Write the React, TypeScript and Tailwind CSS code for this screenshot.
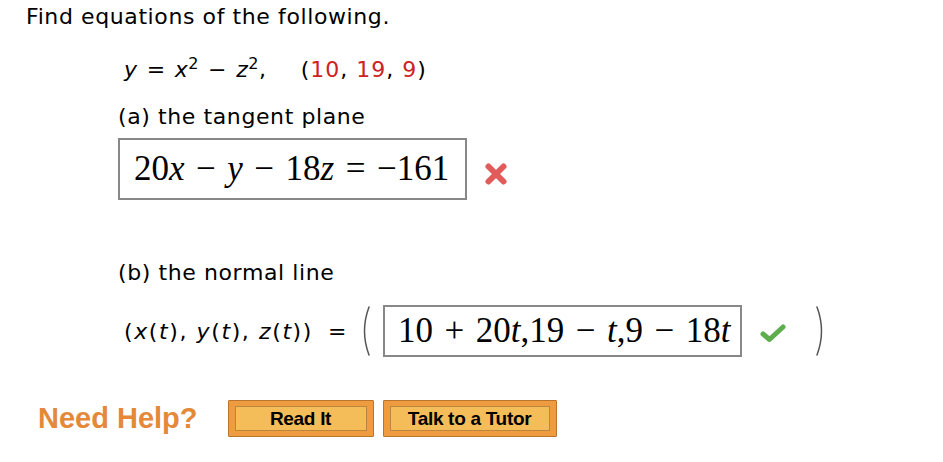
import React from "react";

const TEXT_FONT = "font-['DejaVu_Sans','Verdana',sans-serif]";
const MATH_FONT = "font-['Liberation_Serif','Times_New_Roman',serif]";

function RedX() {
  return (
    <svg width="26" height="26" viewBox="0 0 26 26" className="shrink-0">
      <path d="M5.5 5.5 L20.5 20.5 M20.5 5.5 L5.5 20.5" stroke="#e25b5b" strokeWidth="6" strokeLinecap="round" />
    </svg>
  );
}

function GreenCheck() {
  return (
    <svg width="28" height="20" viewBox="0 0 28 20" className="shrink-0">
      <path d="M4 11 L10.5 16.5 L24 4" stroke="#5fae4e" strokeWidth="5" strokeLinecap="round" strokeLinejoin="round" fill="none" />
    </svg>
  );
}

function Paren({ right = false }: { right?: boolean }) {
  return (
    <svg width="12" height="52" viewBox="0 0 12 52" className="shrink-0">
      <path
        d={right ? "M2 2 Q11 26 2 50" : "M10 2 Q1 26 10 50"}
        stroke="#555"
        strokeWidth="1.5"
        fill="none"
        strokeLinecap="round"
      />
    </svg>
  );
}

function Op({ children }: { children: React.ReactNode }) {
  return <span className="mx-[11.5px]">{children}</span>;
}

function TextOp({ children }: { children: React.ReactNode }) {
  return <span className="mx-[9px]">{children}</span>;
}

function HelpButton({ label, width }: { label: string; width: string }) {
  return (
    <button
      className={`${width} h-[37px] rounded-[1px] border border-[#b9752e] bg-[#ef9c40] px-[6px] py-[5px]`}
    >
      <span className="flex h-full w-full items-center justify-center border border-[#b98640] bg-[#f4bd5a] font-['Liberation_Sans',Arial,sans-serif] text-[19px] font-bold tracking-[-0.3px] text-black">
        {label}
      </span>
    </button>
  );
}

export default function App() {
  return (
    <div className={`${TEXT_FONT} min-h-[462px] w-[943px] bg-white pl-[26px] pt-[3px] text-black tracking-[0.6px]`}>
      <p className="text-[22px] leading-[28px]">Find equations of the following.</p>

      <div className="ml-[92px]">
        <p className="ml-[6px] mt-[25px] text-[22px] leading-[28px]">
          <i>y</i>
          <TextOp>=</TextOp>
          <i>x</i>
          <sup className="text-[16px]">2</sup>
          <TextOp>−</TextOp>
          <i>z</i>
          <sup className="text-[16px]">2</sup>,
          <span className="ml-[34px] tracking-[1px]">
            (<span className="text-[#cc2222]">10</span>, <span className="text-[#cc2222]">19</span>,{" "}
            <span className="text-[#cc2222]">9</span>)
          </span>
        </p>

        <p className="mt-[19px] text-[22px] leading-[28px]">(a) the tangent plane</p>

        <div className="mt-[7px] flex items-center">
          <div className={`${MATH_FONT} flex h-[62px] w-[349px] items-center border-2 border-[#888] pl-[14px] text-[35px] tracking-normal`}>
            20<i>x</i>
            <Op>−</Op>
            <i>y</i>
            <Op>−</Op>
            18<i>z</i>
            <Op>=</Op>
            −161
          </div>
          <div className="ml-[16px] mt-[10px]">
            <RedX />
          </div>
        </div>

        <p className="mt-[59px] text-[22px] leading-[28px]">(b) the normal line</p>

        <div className="mt-[18px] flex items-center">
          <span className="ml-[6px] text-[22px] tracking-[1.6px]">
            (<i>x</i>(<i>t</i>), <i>y</i>(<i>t</i>), <i>z</i>(<i>t</i>))
          </span>
          <span className="ml-[15px] text-[22px]">=</span>
          <div className="ml-[12px]">
            <Paren />
          </div>
          <div className={`${MATH_FONT} ml-[12px] flex h-[52px] w-[359px] items-center border-2 border-[#888] pl-[13px] text-[35px] tracking-normal`}>
            10<Op>+</Op>20<i>t</i>,19<Op>−</Op>
            <i>t</i>,9<Op>−</Op>18<i>t</i>
          </div>
          <div className="ml-[17px] mt-[4px]">
            <GreenCheck />
          </div>
          <div className="ml-[28px]">
            <Paren right />
          </div>
        </div>
      </div>

      <div className="mt-[40px] flex items-center tracking-normal">
        <span className="ml-[12px] font-['Liberation_Sans',Arial,sans-serif] text-[29px] font-bold text-[#e4893a]">
          Need Help?
        </span>
        <div className="ml-[30px] flex gap-[9px]">
          <HelpButton label="Read It" width="w-[146px]" />
          <HelpButton label="Talk to a Tutor" width="w-[174px]" />
        </div>
      </div>
    </div>
  );
}
